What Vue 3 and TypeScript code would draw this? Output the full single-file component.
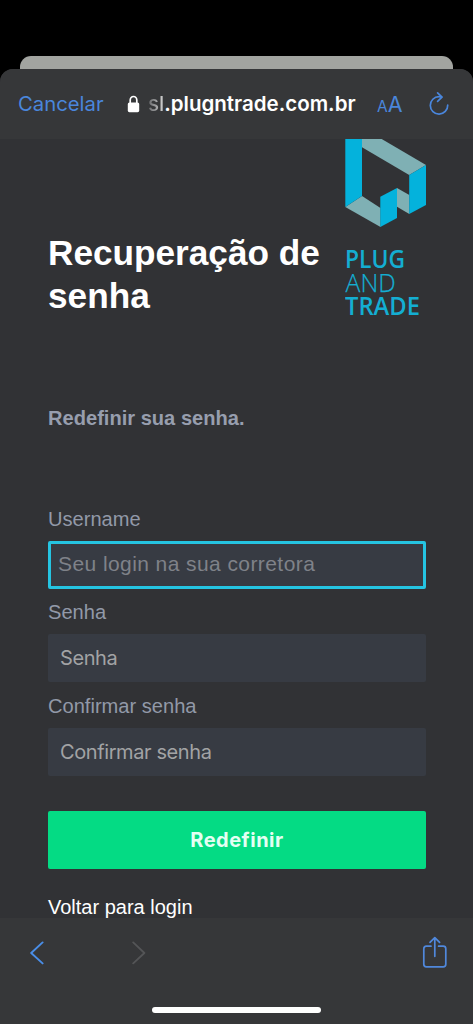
<script setup lang="ts">
import { ref } from 'vue'

interface Field {
  id: string
  label: string
  placeholder: string
  type: string
}

const fields: Field[] = [
  { id: 'username', label: 'Username', placeholder: 'Seu login na sua corretora', type: 'text' },
  { id: 'password', label: 'Senha', placeholder: 'Senha', type: 'password' },
  { id: 'confirm', label: 'Confirmar senha', placeholder: 'Confirmar senha', type: 'password' },
]

const active = ref('username')
const values = ref<Record<string, string>>({ username: '', password: '', confirm: '' })
</script>

<template>
  <div class="screen">
    <div class="behind"></div>
    <div class="sheet">
      <header class="toolbar">
        <span class="cancel">Cancelar</span>
        <svg class="lock" viewBox="0 0 13 18" width="13" height="18">
          <path d="M3.2 8.5V5a3.3 3.5 0 0 1 6.6 0v3.5" fill="none" stroke="#fff" stroke-width="1.7" />
          <rect x="0.8" y="7.4" width="11.4" height="9.8" rx="1.6" fill="#fff" />
        </svg>
        <span class="url"><span class="fade">sl</span>.plugntrade.com.br</span>
        <span class="text-size"><small>A</small>A</span>
        <svg class="reload" viewBox="0 0 22 26" width="22" height="26" fill="none" stroke="#4a86dc" stroke-width="1.7" stroke-linecap="round" stroke-linejoin="round">
          <path d="M13.6 6.1Q12.4 5.7 11 5.7A8.7 8.7 0 1 0 19.7 14.2" />
          <path d="M9.6 1.8L14 6.2L9.6 10.3" />
        </svg>
      </header>

      <main class="content">
        <div class="hero">
          <h1>Recuperação de senha</h1>
          <svg class="logo" viewBox="0 0 82 190" width="82" height="190">
            <g fill="#7fb0b4">
              <path d="M17 0H36.7L81 26L64.2 36L17 8.3Z" />
              <path d="M0.3 68L17 57L35.5 69V88Z" />
              <path d="M52 49L64.3 56V75L52 67.7Z" />
            </g>
            <g fill="#04b2dc">
              <path d="M0.3 0H17V57L0.3 68Z" />
              <path d="M35.3 57.7L52 49V79L35.3 88Z" />
              <path d="M64.2 36L81 26V66L64.2 75Z" />
            </g>
            <g fill="#14aed2" class="wordmark">
              <text x="0" y="129.2" textLength="60" lengthAdjust="spacingAndGlyphs" class="heavy">PLUG</text>
              <text x="0.6" y="152.6" textLength="50" lengthAdjust="spacingAndGlyphs" class="thin">AND</text>
              <text x="0" y="176" textLength="75" lengthAdjust="spacingAndGlyphs" class="heavy">TRADE</text>
            </g>
          </svg>
        </div>

        <p class="lead">Redefinir sua senha.</p>

        <form @submit.prevent>
          <div v-for="f in fields" :key="f.id" class="field">
            <label :for="f.id">{{ f.label }}</label>
            <input
              :id="f.id"
              v-model="values[f.id]"
              :type="f.type"
              :placeholder="f.placeholder"
              :class="{ active: active === f.id }"
              @focus="active = f.id"
            />
          </div>
          <button type="submit">Redefinir</button>
        </form>
        <a class="back">Voltar para login</a>
      </main>

      <footer class="bottom">
        <div class="nav">
          <svg viewBox="0 0 14 24" width="14" height="24" fill="none" stroke="#4a8ee8" stroke-width="1.9" stroke-linecap="round" stroke-linejoin="round">
            <path d="M12.6 1.4L1.2 12L12.6 22.4" />
          </svg>
          <svg class="forward" viewBox="0 0 14 24" width="14" height="24" fill="none" stroke="#545557" stroke-width="1.8" stroke-linecap="round" stroke-linejoin="round">
            <path d="M1.2 1.4L12.4 12L1.2 22.4" />
          </svg>
          <svg class="share" viewBox="0 0 26 32" width="26" height="32" fill="none" stroke="#5088dc" stroke-width="1.7" stroke-linecap="round" stroke-linejoin="round">
            <path d="M9 10.2H4.4Q1.8 10.2 1.8 12.8V28.2Q1.8 30.8 4.4 30.8H21.2Q23.8 30.8 23.8 28.2V12.8Q23.8 10.2 21.2 10.2H16.6" />
            <path d="M12.8 20.3V1.8M8 6.4L12.8 1.6L17.6 6.4" />
          </svg>
        </div>
        <div class="home"></div>
      </footer>
    </div>
  </div>
</template>

<style>
html,
body {
  margin: 0;
  background: #000;
}
</style>

<style scoped>
* {
  box-sizing: border-box;
}
.screen {
  width: 473px;
  height: 1024px;
  padding-top: 56px;
  overflow: hidden;
  background: #000;
  font-family: 'Liberation Sans', Arial, sans-serif;
}
.behind {
  height: 12.5px;
  margin: 0 20px;
  border-radius: 11px 11px 0 0;
  background: #a2a4a0;
}
.sheet {
  display: flex;
  flex-direction: column;
  height: 955.5px;
  border-radius: 13px 13px 0 0;
  background: #313235;
  overflow: hidden;
}
.toolbar {
  display: flex;
  align-items: center;
  height: 70.5px;
  flex: none;
  padding: 0 23px 0 18px;
  background: #363739;
  font-family: Inter, sans-serif;
  white-space: nowrap;
}
.cancel {
  width: 109px;
  font-size: 20.3px;
  color: #4a86dc;
}
.url {
  width: 208px;
  margin-left: 8px;
  font-size: 20.5px;
  font-weight: 600;
  color: #fff;
}
.fade {
  font-weight: 500;
  background: linear-gradient(90deg, #66676a, #d8d8d8);
  background-clip: text;
  color: transparent;
}
.text-size {
  margin-left: 21px;
  font-size: 21.5px;
  color: #4a86dc;
}
.text-size small {
  font-size: 15.5px;
}
.reload {
  margin: 0 0 0 auto;
}
.content {
  flex: none;
  height: 779px;
  padding: 0 47px 0 48px;
  overflow: hidden;
}
.hero {
  display: flex;
  justify-content: space-between;
  height: 182px;
}
h1 {
  width: 280px;
  margin: 92px 0 0;
  font-size: 35.2px;
  line-height: 43px;
  font-weight: 700;
  color: #fff;
}
.logo {
  flex: none;
  margin-right: -1px;
}
.wordmark {
  font-family: 'Open Sans', sans-serif;
  font-size: 25.8px;
}
.heavy {
  font-weight: 600;
}
.thin {
  font-weight: 300;
  stroke: #14aed2;
  stroke-width: 0.25;
}
.lead {
  margin: 84px 0 0;
  font-size: 20.1px;
  line-height: 26px;
  font-weight: 700;
  color: #979eae;
}
form {
  display: block;
  padding-top: 76px;
}
.field {
  height: 93.3px;
}
label {
  display: block;
  height: 34px;
  font-size: 20.1px;
  line-height: 24px;
  color: #9299a8;
}
input {
  display: block;
  width: 378px;
  height: 48px;
  padding: 0 12px;
  border: 0;
  border-radius: 2px;
  outline: none;
  background: #373b43;
  font-family: Inter, sans-serif;
  font-size: 20px;
  letter-spacing: -0.4px;
  color: #fff;
}
input::placeholder {
  color: #a2a3a5;
  opacity: 1;
}
input.active {
  padding: 0 7px 2px;
  border: 3px solid #25c4e2;
  font-family: 'Liberation Sans', Arial, sans-serif;
  font-size: 21px;
  letter-spacing: 0.42px;
}
input.active::placeholder {
  color: #7f8289;
}
button {
  display: block;
  width: 378px;
  height: 58px;
  margin-top: 24px;
  padding: 0;
  border: 0;
  border-radius: 2px;
  background: #04db84;
  font-family: Inter, sans-serif;
  font-size: 20px;
  font-weight: 700;
  letter-spacing: 0.5px;
  color: #e4fff3;
}
.back {
  display: block;
  margin-top: 26px;
  font-size: 20px;
  line-height: 24px;
  color: #fff;
}
.bottom {
  flex: 1;
  background: #363739;
}
.nav {
  display: flex;
  align-items: center;
  height: 70px;
  padding: 0 25px 0 30px;
}
.forward {
  margin-left: 88px;
}
.share {
  margin: -2px 0 0 auto;
}
.home {
  width: 169px;
  height: 6px;
  margin: 19px auto 0;
  border-radius: 3px;
  background: #fff;
}
</style>
